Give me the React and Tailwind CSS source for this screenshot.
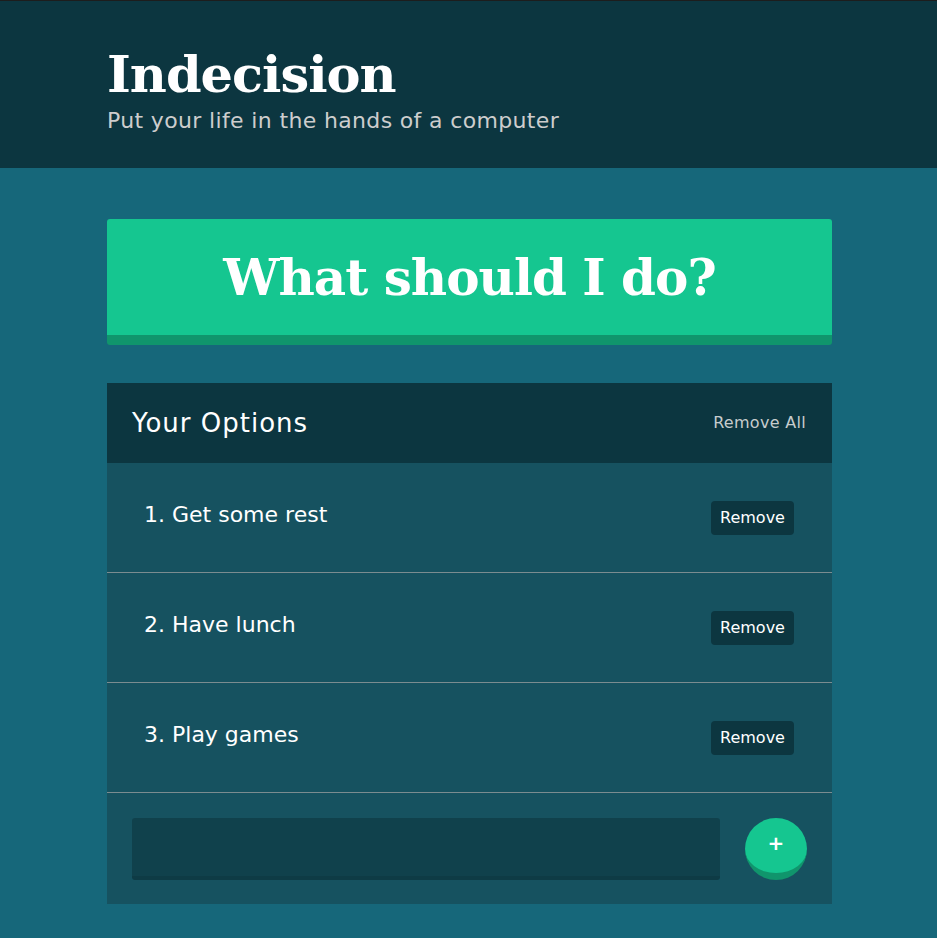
import React, { useState } from 'react';

const slab = { fontFamily: '"DejaVu Serif", "Liberation Serif", serif' };

const OptionRow = ({ index, text, onRemove }) => (
    <div className="flex items-center justify-between h-[110px] border-b border-[#7b8c90] pl-[37px] pr-[38px]">
        <p className="text-[22px] text-white pb-[6px]">{index}. {text}</p>
        <button
            onClick={onRemove}
            className="h-[34px] w-[83px] rounded-[4px] bg-[#0c3640] text-[16px] text-white"
        >
            Remove
        </button>
    </div>
);

export default function App() {
    const [options, setOptions] = useState(['Get some rest', 'Have lunch', 'Play games']);

    return (
        <div className="min-h-screen bg-[#16677a] border-t border-[#1d1d1d]" style={{ fontFamily: '"DejaVu Sans", "Noto Sans", sans-serif' }}>
            {/* Header */}
            <header className="bg-[#0c3640] h-[167px]">
                <div className="w-[725px] ml-[107px] pt-[42px]">
                    <h1 className="text-[51px] font-bold text-white leading-[62px] tracking-[-1px]" style={slab}>Indecision</h1>
                    <h2 className="text-[22px] text-[#cdcdcd] leading-[28px] tracking-[0.35px] mt-[2px]">Put your life in the hands of a computer</h2>
                </div>
            </header>

            <div className="w-[725px] ml-[107px] pt-[51px] pb-[34px]">
                {/* Big action button */}
                <button
                    className="w-full h-[126px] rounded-[3px] bg-[#15c690] border-b-[10px] border-[#10956c] text-white text-[50px] font-bold tracking-[-1px]"
                    style={slab}
                >
                    What should I do?
                </button>

                {/* Options widget */}
                <div className="mt-[38px] bg-[#165260]">
                    <div className="flex items-center justify-between h-[80px] bg-[#0c3640] pl-[25px] pr-[26px]">
                        <h3 className="text-[26px] text-white tracking-[1px]">Your Options</h3>
                        <button onClick={() => setOptions([])} className="text-[16px] text-[#c6cccd] tracking-[0.3px]">Remove All</button>
                    </div>

                    {options.map((opt, i) => (
                        <OptionRow
                            key={opt}
                            index={i + 1}
                            text={opt}
                            onRemove={() => setOptions(options.filter((o) => o !== opt))}
                        />
                    ))}

                    <form className="flex items-center gap-[25px] h-[111px] px-[25px]" onSubmit={(e) => e.preventDefault()}>
                        <input
                            type="text"
                            className="flex-1 h-[62px] rounded-[3px] bg-[#10414c] border-b-[4px] border-[#0e3b45] outline-none text-white px-3"
                        />
                        <button className="w-[62px] h-[62px] rounded-full bg-[#15c690] border-b-[7px] border-[#10956c] text-white text-[20px] font-bold leading-none pb-[4px]">
                            +
                        </button>
                    </form>
                </div>
            </div>
        </div>
    );
}
